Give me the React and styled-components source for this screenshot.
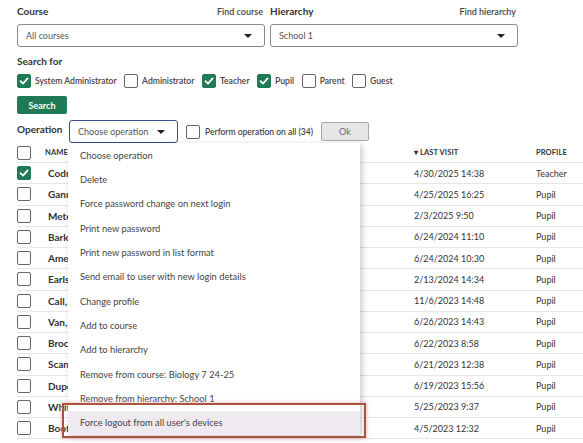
import styled, { createGlobalStyle } from 'styled-components';

const GlobalStyle = createGlobalStyle`
  body {
    margin: 0;
    background: #fff;
    font-family: Lato, "Liberation Sans", sans-serif;
    color: #333;
    overflow: hidden;
  }
`;

const Page = styled.div`
  width: 583px;
  height: 443px;
  padding: 2px 0 0 17px;
  box-sizing: border-box;
  overflow: hidden;
`;

const FilterGrid = styled.div`
  display: grid;
  grid-template-columns: 248px 248px;
  column-gap: 5px;
`;

const FieldHead = styled.div`
  display: flex;
  justify-content: space-between;
  align-items: center;
  height: 18px;
`;

const Label = styled.span`
  font-size: 10px;
  font-weight: 700;
  color: #333;
`;

const FindLink = styled.span`
  font-size: 9px;
  font-weight: 600;
  color: #444;
  margin-right: 2px;
`;

const Select = styled.div`
  display: flex;
  align-items: center;
  justify-content: space-between;
  height: ${(p) => p.$h || 23}px;
  width: ${(p) => (p.$w ? `${p.$w}px` : 'auto')};
  margin-top: ${(p) => (p.$inline ? 0 : 4)}px;
  padding: 0 12px 0 8px;
  box-sizing: border-box;
  border: 1px solid ${(p) => (p.$focus ? '#3d4b8f' : '#8a8a8a')};
  border-radius: 3px;
  font-size: 9px;
  color: #555;
  background: #fff;
`;

const Caret = styled.span`
  width: 0;
  height: 0;
  border-left: 4px solid transparent;
  border-right: 4px solid transparent;
  border-top: 4px solid #222;
`;

const SectionLabel = styled(Label)`
  display: block;
  margin-top: 8px;
  height: 14px;
`;

const CheckRow = styled.div`
  display: flex;
  align-items: center;
  gap: 7.5px;
  height: 16px;
  margin-top: 4px;
`;

const CheckItem = styled.label`
  display: flex;
  align-items: center;
  gap: 4px;
  font-size: 8.6px;
  font-weight: 600;
  color: #444;
`;

const Box = styled.span`
  width: 14px;
  height: 14px;
  box-sizing: border-box;
  border-radius: 2px;
  border: 1.5px solid ${(p) => (p.$checked ? '#1f7a55' : '#666')};
  background: ${(p) => (p.$checked ? '#1f7a55' : '#fff')};
  display: inline-flex;
  align-items: center;
  justify-content: center;
  flex: none;
`;

const Check = ({ checked }) => (
  <Box $checked={checked}>
    {checked && (
      <svg width="10" height="10" viewBox="0 0 10 10">
        <path d="M1.5 5.2 L4 7.6 L8.6 2.4" fill="none" stroke="#fff" strokeWidth="1.8" strokeLinecap="round" strokeLinejoin="round" />
      </svg>
    )}
  </Box>
);

const SearchButton = styled.button`
  display: block;
  margin-top: 7px;
  width: 50px;
  height: 18px;
  border: none;
  border-radius: 2px;
  background: #1f7a55;
  color: #fff;
  font-family: inherit;
  font-size: 9px;
  font-weight: 700;
  padding: 0;
`;

const OperationRow = styled.div`
  display: flex;
  align-items: center;
  margin-top: 6px;
  height: 23px;
`;

const OperationLabel = styled(Label)`
  width: 52px;
  margin-top: -5px;
`;

const Dropdown = styled.div`
  position: relative;
  z-index: 2;
`;

const Menu = styled.ul`
  position: absolute;
  top: 23px;
  left: -1px;
  width: 292px;
  margin: 0;
  padding: 0;
  list-style: none;
  background: #fff;
  box-shadow: 2px 2px 6px rgba(0, 0, 0, 0.22);
`;

const MenuItem = styled.li`
  height: 24.35px;
  display: flex;
  align-items: center;
  padding-left: 12px;
  font-size: 9.3px;
  color: #444;
  background: ${(p) => (p.$active ? '#efe9f0' : '#fff')};
`;

const Highlight = styled.div`
  position: absolute;
  left: -6px;
  right: -6px;
  bottom: -3px;
  height: 31px;
  border: 2px solid #a8553f;
  box-shadow: 0 0 3px 1px rgba(240, 160, 180, 0.6);
  pointer-events: none;
`;

const PerformItem = styled(CheckItem)`
  margin-left: 8px;
  gap: 5px;
  font-size: 8.5px;
`;

const OkButton = styled.button`
  margin-left: 8px;
  width: 48px;
  height: 19px;
  border: 1px solid #a8a8a8;
  border-radius: 2px;
  background: #e6e6e6;
  color: #666;
  font-family: inherit;
  font-size: 9px;
  padding: 0;
`;

const Table = styled.div`
  width: 600px;
`;

const Row = styled.div`
  display: grid;
  grid-template-columns: 28px 369px 122px 1fr;
  align-items: center;
  box-sizing: border-box;
  height: ${(p) => (p.$head ? 20 : 21.25)}px;
  border-bottom: 1px solid #e6e6e6;
  font-size: 9px;
  color: #333;
`;

const HeadCell = styled.span`
  font-size: 7.5px;
  font-weight: 700;
  color: #333;
  letter-spacing: 0.1px;
`;

const NameCell = styled.span`
  padding-left: 3px;
  font-weight: 700;
  font-size: 10px;
  color: #333;
`;

const ops = [
  'Choose operation',
  'Delete',
  'Force password change on next login',
  'Print new password',
  'Print new password in list format',
  'Send email to user with new login details',
  'Change profile',
  'Add to course',
  'Add to hierarchy',
  'Remove from course: Biology 7 24-25',
  'Remove from hierarchy: School 1',
  "Force logout from all user's devices",
];

const rows = [
  ['Codrington, Ava', '4/30/2025 14:38', 'Teacher', true],
  ['Gannon, Leo', '4/25/2025 16:25', 'Pupil'],
  ['Meteyer, Noah', '2/3/2025 9:50', 'Pupil'],
  ['Barker, Mia', '6/24/2024 11:10', 'Pupil'],
  ['Amerson, Eli', '6/24/2024 10:30', 'Pupil'],
  ['Earlston, Zoe', '2/13/2024 14:34', 'Pupil'],
  ['Call, Owen', '11/6/2023 14:48', 'Pupil'],
  ['Van, Lily', '6/26/2023 14:43', 'Pupil'],
  ['Brockman, Ian', '6/22/2023 8:58', 'Pupil'],
  ['Scanlon, Ruby', '6/21/2023 12:38', 'Pupil'],
  ['Dupont, Max', '6/19/2023 15:56', 'Pupil'],
  ['Whitby, Ella', '5/25/2023 9:37', 'Pupil'],
  ['Booth, Sam', '4/5/2023 12:32', 'Pupil'],
];

export default function App() {
  return (
    <Page>
      <GlobalStyle />
      <FilterGrid>
        <div>
          <FieldHead>
            <Label>Course</Label>
            <FindLink>Find course</FindLink>
          </FieldHead>
          <Select>
            All courses <Caret />
          </Select>
        </div>
        <div>
          <FieldHead>
            <Label>Hierarchy</Label>
            <FindLink>Find hierarchy</FindLink>
          </FieldHead>
          <Select>
            School 1 <Caret />
          </Select>
        </div>
      </FilterGrid>

      <SectionLabel>Search for</SectionLabel>
      <CheckRow>
        <CheckItem><Check checked /> System Administrator</CheckItem>
        <CheckItem><Check /> Administrator</CheckItem>
        <CheckItem><Check checked /> Teacher</CheckItem>
        <CheckItem><Check checked /> Pupil</CheckItem>
        <CheckItem><Check /> Parent</CheckItem>
        <CheckItem><Check /> Guest</CheckItem>
      </CheckRow>
      <SearchButton>Search</SearchButton>

      <OperationRow>
        <OperationLabel>Operation</OperationLabel>
        <Dropdown>
          <Select $focus $inline $w={109} $h={23}>
            Choose operation <Caret />
          </Select>
          <Menu>
            {ops.map((op, i) => (
              <MenuItem key={op} $active={i === ops.length - 1}>{op}</MenuItem>
            ))}
            <Highlight />
          </Menu>
        </Dropdown>
        <PerformItem><Check /> Perform operation on all (34)</PerformItem>
        <OkButton>Ok</OkButton>
      </OperationRow>

      <Table>
        <Row $head>
          <Check />
          <HeadCell>NAME</HeadCell>
          <HeadCell>▾ LAST VISIT</HeadCell>
          <HeadCell>PROFILE</HeadCell>
        </Row>
        {rows.map(([name, date, profile, checked]) => (
          <Row key={name}>
            <Check checked={checked} />
            <NameCell>{name}</NameCell>
            <span>{date}</span>
            <span>{profile}</span>
          </Row>
        ))}
      </Table>
    </Page>
  );
}
